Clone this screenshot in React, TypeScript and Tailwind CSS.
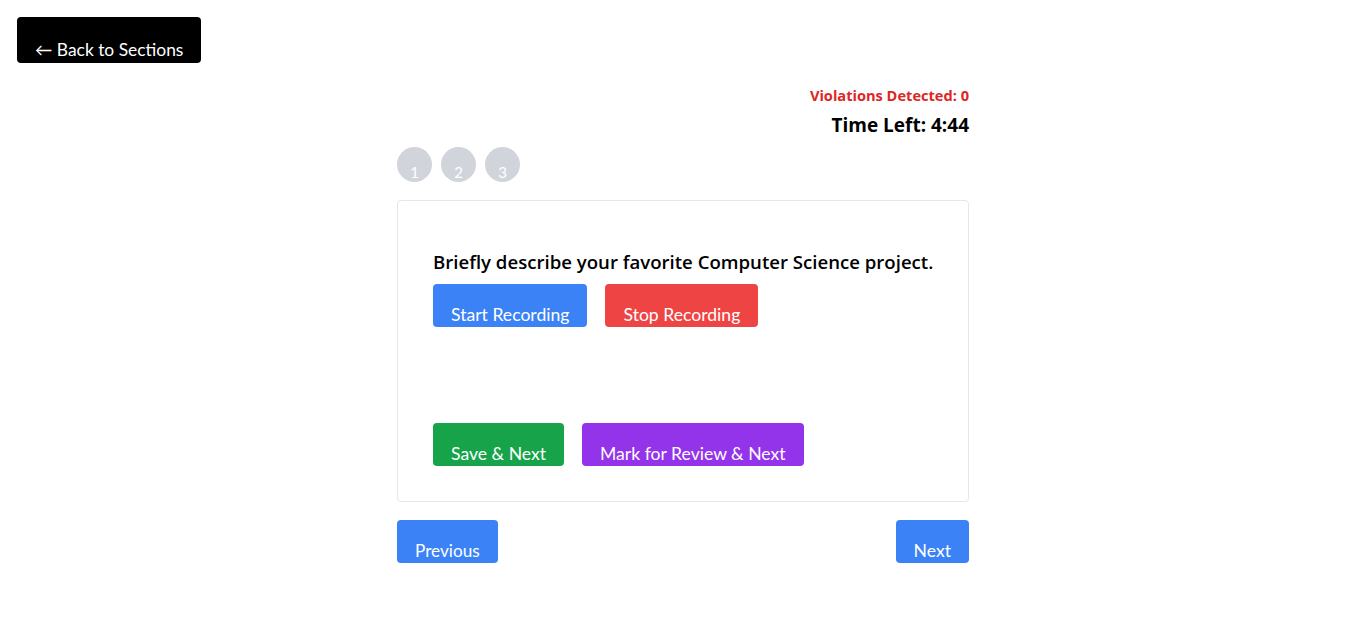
import React from 'react'

const font = "font-['Lato','Noto_Sans',sans-serif]"
const bold = "font-['Open_Sans','Noto_Sans',sans-serif]"

function Btn({ children, className }: { children: React.ReactNode; className: string }) {
  return (
    <button className={`h-[43px] rounded-[4px] px-[18px] pt-[20px] pb-[2px] text-[17.6px] leading-[21px] text-white ${className}`}>
      {children}
    </button>
  )
}

export default function App() {
  const questions = [1, 2, 3]

  return (
    <div className={`min-h-screen bg-white ${font}`}>
      <div className="px-[17px] pt-[17px]">
        <button className="h-[46px] rounded-[4px] bg-black px-[18px] pt-[19px] text-[17.4px] leading-[21px] text-white">
          ← Back to Sections
        </button>
      </div>

      <div className="mx-auto mt-[22px] w-[572px]">
        {/* Header */}
        <div className={`flex flex-col items-end ${bold}`}>
          <p className="text-[14.6px] font-bold leading-[20px] text-[#dc2626]">Violations Detected: 0</p>
          <p className="mt-[8px] text-[19px] font-bold leading-[24px] text-black">Time Left: 4:44</p>
        </div>

        {/* Question palette */}
        <div className="mt-[10px] flex gap-[9px]">
          {questions.map((q) => (
            <div
              key={q}
              className="flex h-[35px] w-[35px] items-end justify-center rounded-full bg-[#d1d5db] pb-[1px] text-[15px] leading-[18px] text-white"
            >
              {q}
            </div>
          ))}
        </div>

        {/* Question card */}
        <div className="mt-[18px] h-[302px] rounded-[4px] border border-[#e5e7eb] px-[35px] pt-[49px]">
          <p className={`whitespace-nowrap text-[18.6px] font-semibold leading-[24px] text-black ${bold}`}>
            Briefly describe your favorite Computer Science project.
          </p>
          <div className="mt-[10px] flex gap-[18px]">
            <Btn className="bg-[#3b82f6]">Start Recording</Btn>
            <Btn className="bg-[#ef4444]">Stop Recording</Btn>
          </div>
          <div className="mt-[96px] flex gap-[18px]">
            <Btn className="bg-[#16a34a]">Save &amp; Next</Btn>
            <Btn className="bg-[#9333ea]">Mark for Review &amp; Next</Btn>
          </div>
        </div>

        {/* Nav */}
        <div className="mt-[18px] flex justify-between">
          <Btn className="bg-[#3b82f6] !text-[17.2px]">Previous</Btn>
          <Btn className="bg-[#3b82f6]">Next</Btn>
        </div>
      </div>
    </div>
  )
}
